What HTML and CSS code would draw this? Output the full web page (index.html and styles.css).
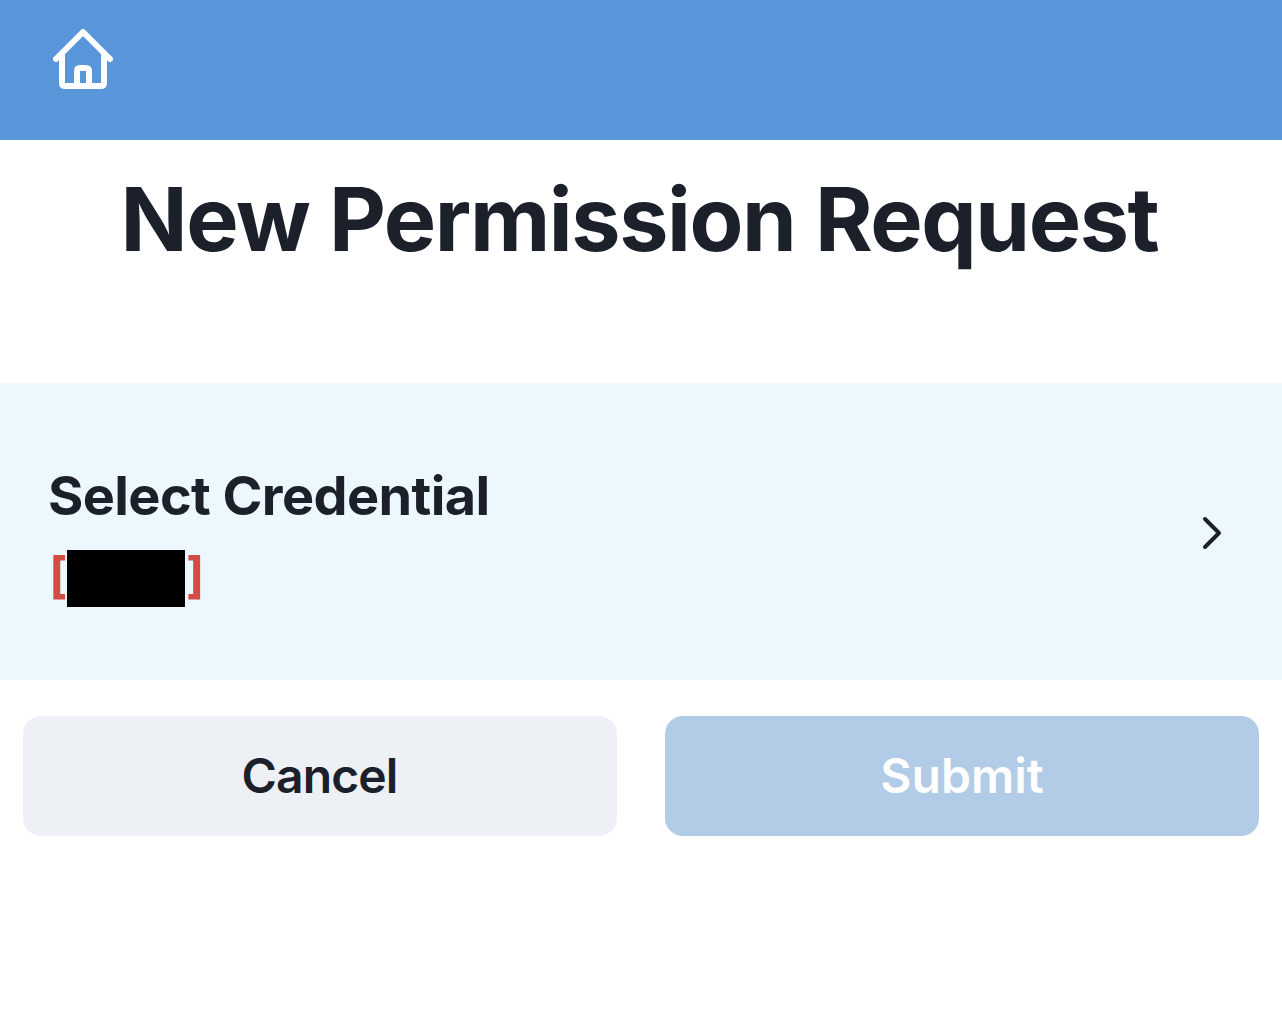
FILE: index.html
```html
<!DOCTYPE html>
<html lang="en">
<head>
<meta charset="utf-8">
<title>New Permission Request</title>
<link rel="stylesheet" href="styles.css">
</head>
<body>
<header class="topbar">
  <a class="home" href="#" aria-label="Home">
    <svg width="60" height="60" viewBox="0 0 60 60" fill="none" stroke="#fff" stroke-width="6" stroke-linecap="round" stroke-linejoin="round">
      <path d="M3 30 30 3l27 27"/>
      <path d="M9 26v28q0 3 3 3h36q3 0 3-3V26"/>
      <path d="M24 57V42q0-3 3-3h6q3 0 3 3v15"/>
    </svg>
  </a>
</header>
<main>
  <h1 class="title">New Permission Request</h1>
  <button class="credential">
    <span class="credential-info">
      <span class="credential-label">Select Credential</span>
      <span class="credential-value"><span class="bracket">[</span><span class="redacted"></span><span class="bracket">]</span></span>
    </span>
    <svg width="20" height="34" viewBox="0 0 20 34" fill="none" stroke="#1b202b" stroke-width="4" stroke-linecap="round" stroke-linejoin="round"><path d="M3 3l14 14L3 31"/></svg>
  </button>
  <div class="actions">
    <button class="button cancel">Cancel</button>
    <button class="button submit" disabled>Submit</button>
  </div>
</main>
</body>
</html>
```

FILE: styles.css
```css
* { box-sizing: border-box; }
body { margin: 0; background: #fff; color: #1b202b; font-family: Inter, "Liberation Sans", sans-serif; }
button { border: 0; margin: 0; font: inherit; color: inherit; }
.topbar { height: 140px; padding: 29px 53px; background: #5a96da; }
.home, .home svg { display: block; width: 60px; height: 60px; }
.title { height: 243px; margin: 0; padding: 25px 3px 0 0; text-align: center; font-size: 88px; line-height: 108px; font-weight: 700; letter-spacing: -1.4px; white-space: nowrap; }
.credential { display: flex; align-items: center; justify-content: space-between; width: 100%; height: 297px; padding: 3px 60px 0 48px; background: #ecf8fe; text-align: left; }
.credential-info { display: flex; flex-direction: column; gap: 10px; padding-top: 8px; }
.credential-label { font-size: 54px; line-height: 72px; font-weight: 700; letter-spacing: -0.6px; }
.credential-value { display: flex; align-items: center; height: 72px; color: #d24b45; font-size: 49px; font-weight: 700; }
.bracket { width: 18px; line-height: 57px; padding-bottom: 6px; }
.bracket:first-child { width: 19px; padding-left: 1px; }
.bracket:last-child { padding-left: 1px; }
.redacted { width: 118px; height: 57px; background: #000; }
.actions { display: grid; grid-template-columns: 1fr 1fr; gap: 48px; padding: 36px 23px; }
.button { height: 120px; padding: 0 0 1px; border-radius: 18px; font-size: 48px; font-weight: 600; }
.cancel { padding-right: 1px; background: #edf1f6; letter-spacing: -0.9px; }
.submit { background: #b2cbe6; color: #fff; }
```
